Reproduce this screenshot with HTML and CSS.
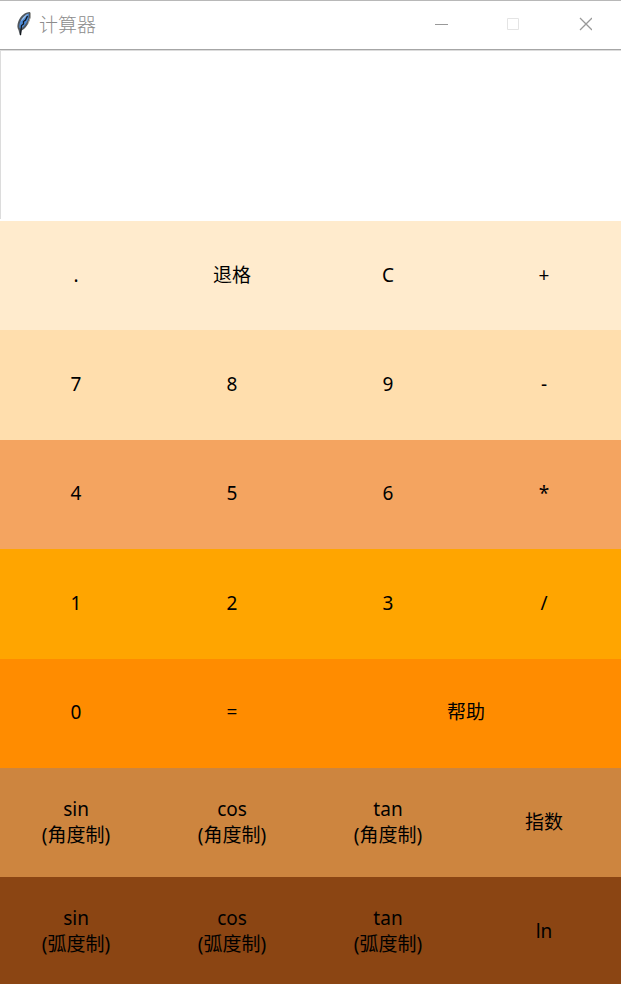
FILE: index.html
```html
<!DOCTYPE html>
<html lang="zh-CN">
<head>
<meta charset="utf-8">
<title>计算器</title>
<link rel="stylesheet" href="styles.css">
</head>
<body>
<main class="window">
  <header class="titlebar">
    <svg class="feather" viewBox="0 0 16 26" aria-hidden="true">
      <path d="M14 1 C9 1 4.500 5 2.500 10 C1 14 1 17 2.500 19 L3.500 23 L4.500 25 L5.500 19.500 C9.500 18 12.500 13 14 8 C15 5 15 2.500 14 1Z" fill="#50565c"/>
      <path d="M12.800 2.500 C8.500 3.500 5 8 3.800 12 C3 15 3.200 17 4.300 17.800 C7.500 16.500 11 12 12.500 7.500Z" fill="#4d8ad6"/>
      <path d="M12.500 2.500 C9 4 6 7 4.800 10.500 L8 7.500Z" fill="#a3c2e4"/>
      <path d="M11.500 5 L9.500 9 L7.500 10.500 L7.500 13 L5.500 14.500 L4.500 24" fill="none" stroke="#10151c" stroke-width="1.300"/>
      <path d="M14.500 2 L14.500 6 L12 12.500" fill="none" stroke="#a9a9a6" stroke-width="1"/>
    </svg>
    <h1 class="title">计算器</h1>
    <button class="control" type="button" aria-label="最小化"><svg viewBox="0 0 14 14"><path d="M1 7.500H14" stroke="#999"/></svg></button>
    <button class="control" type="button" aria-label="最大化" disabled><svg viewBox="0 0 14 14"><path d="M1.500 1.500H12.500V12.500H1.500Z" stroke="#e4e4e4"/></svg></button>
    <button class="control" type="button" aria-label="关闭"><svg viewBox="0 0 14 14"><path d="M2 1L14 13M14 1L2 13" stroke="#999" stroke-width="1.300"/></svg></button>
  </header>
  <input class="display" type="text" aria-label="算式">
  <section class="keypad" aria-label="键盘">
    <button class="key almond" type="button">.</button>
    <button class="key almond" type="button">退格</button>
    <button class="key almond" type="button">C</button>
    <button class="key almond" type="button">+</button>
    <button class="key navajo" type="button">7</button>
    <button class="key navajo" type="button">8</button>
    <button class="key navajo" type="button">9</button>
    <button class="key navajo" type="button">-</button>
    <button class="key sandy" type="button">4</button>
    <button class="key sandy" type="button">5</button>
    <button class="key sandy" type="button">6</button>
    <button class="key sandy" type="button">*</button>
    <button class="key orange" type="button">1</button>
    <button class="key orange" type="button">2</button>
    <button class="key orange" type="button">3</button>
    <button class="key orange" type="button">/</button>
    <button class="key dark" type="button">0</button>
    <button class="key dark" type="button">=</button>
    <button class="key dark wide" type="button">帮助</button>
    <button class="key peru" type="button">sin<br>(角度制)</button>
    <button class="key peru" type="button">cos<br>(角度制)</button>
    <button class="key peru" type="button">tan<br>(角度制)</button>
    <button class="key peru" type="button">指数</button>
    <button class="key saddle" type="button">sin<br>(弧度制)</button>
    <button class="key saddle" type="button">cos<br>(弧度制)</button>
    <button class="key saddle" type="button">tan<br>(弧度制)</button>
    <button class="key saddle" type="button">ln</button>
  </section>
</main>
</body>
</html>
```
FILE: styles.css
```css
* {
  box-sizing: border-box;
}

body {
  margin: 0;
  background: #fff;
  font-family: "Noto Sans", "Noto Sans CJK SC", sans-serif;
}

.window {
  display: grid;
  grid-template-rows: auto auto 1fr;
  min-height: 100vh;
  overflow: hidden;
}

.titlebar {
  display: flex;
  align-items: center;
  height: 50px;
  padding: 0 0 2px 16px;
  border-top: 1px solid #b8b8b8;
  border-bottom: 1px solid #a6a6a6;
}

.feather {
  width: 16px;
  height: 26px;
}

.title {
  flex: 1;
  margin: 0 0 0 7px;
  color: #8c8c8c;
  font-family: "Noto Sans CJK SC", sans-serif;
  font-size: 19px;
  font-weight: 300;
  line-height: 26px;
}

.control {
  display: grid;
  place-items: center;
  width: 72px;
  height: 46px;
  padding: 0;
  border: 0;
  background: none;
}

.control svg {
  width: 14px;
  height: 14px;
  fill: none;
}

.display {
  width: 100%;
  height: 169px;
  margin-bottom: 2px;
  padding: 0 8px;
  border: 0 solid #dcdcdc;
  border-width: 1px 0 0 1px;
  border-radius: 0;
  background: #fff;
  font: inherit;
  font-size: 32px;
  outline: 0;
}

.keypad {
  display: grid;
  grid-template-columns: repeat(4, 1fr);
  grid-template-rows: repeat(6, 41fr) 40fr;
  margin: 0 -1px 0 -2px;
}

.key {
  padding: 0 0 2px;
  border: 0;
  color: #000;
  font: inherit;
  font-size: 19px;
  line-height: 26px;
}

.wide {
  grid-column: span 2;
}

.almond {
  background: #ffebcd;
}

.navajo {
  background: #ffdead;
}

.sandy {
  background: #f4a460;
}

.orange {
  background: #ffa500;
}

.dark {
  background: #ff8c00;
}

.peru {
  background: #cd853f;
}

.saddle {
  padding: 0;
  background: #8b4513;
}
```
